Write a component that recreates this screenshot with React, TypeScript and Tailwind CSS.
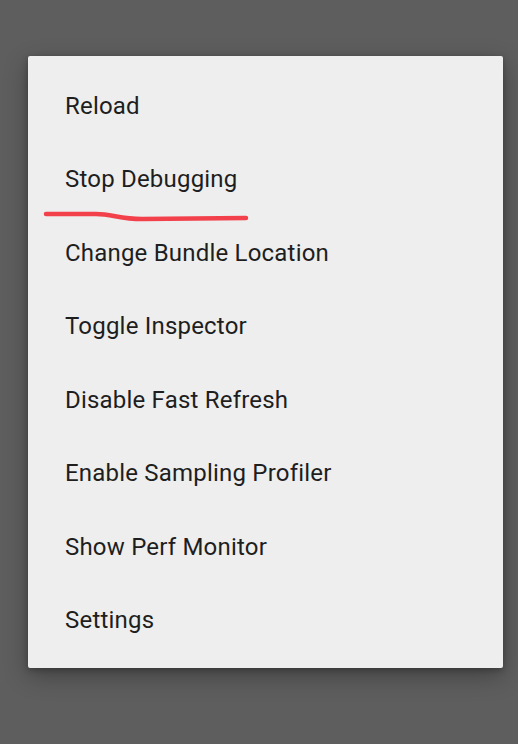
// Dev menu overlay — list of debug actions on a dimmed backdrop
const items = [
  'Reload',
  'Stop Debugging',
  'Change Bundle Location',
  'Toggle Inspector',
  'Disable Fast Refresh',
  'Enable Sampling Profiler',
  'Show Perf Monitor',
  'Settings',
]

export default function App() {
  return (
    <div className="relative w-[518px] h-[744px] bg-[#5e5e5e] pt-[56px] pl-[28px] overflow-hidden" style={{ fontFamily: 'Roboto, "Noto Sans", sans-serif' }}>
      <div className="w-[475px] h-[612px] bg-[#eeeeee] rounded-[2px] pt-[13px] pb-[11px] shadow-[0_8px_24px_rgba(0,0,0,0.3),0_2px_6px_rgba(0,0,0,0.25)]">
        {items.map((label) => (
          <div key={label} className="h-[73.5px] flex items-center pl-[37px] text-[24px] tracking-[0.2px] text-[#1e1e1e]">
            {label}
          </div>
        ))}
      </div>
      {/* hand-drawn red underline */}
      <svg className="absolute left-0 top-0 pointer-events-none" width="518" height="744">
        <path
          d="M46 214 L96 214 C112 214 120 219 142 219 L246 218"
          fill="none"
          stroke="#f2414b"
          strokeWidth="4.5"
          strokeLinecap="round"
          strokeLinejoin="round"
        />
      </svg>
    </div>
  )
}
